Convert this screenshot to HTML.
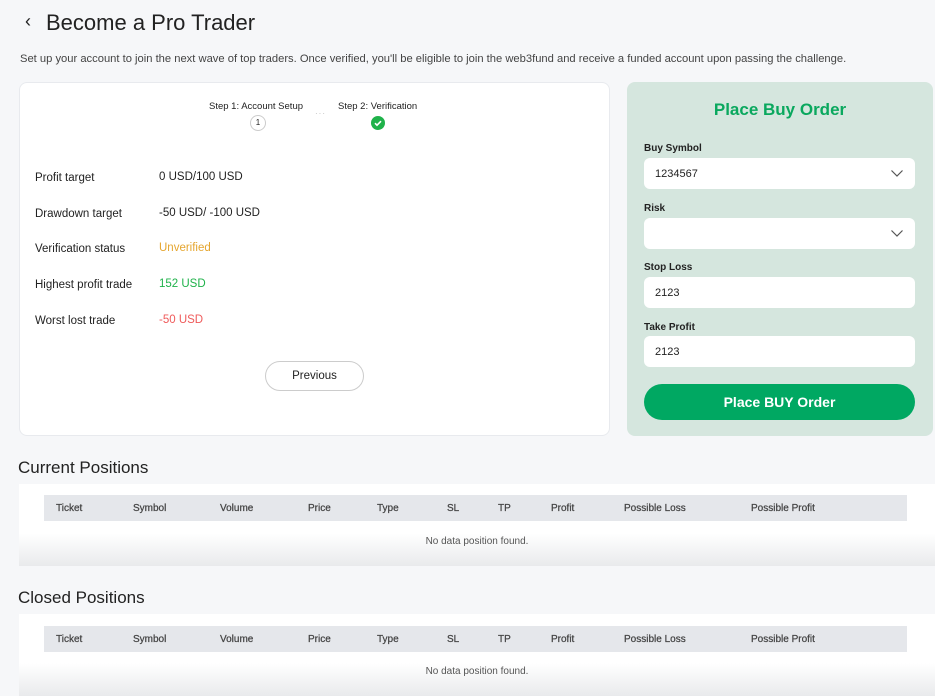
<!DOCTYPE html>
<html><head><meta charset="utf-8"><style>
*{margin:0;padding:0;box-sizing:border-box}
body{width:935px;height:693px;overflow:hidden;background:#f6f7f9;font-family:"Liberation Sans",sans-serif;color:#222;position:relative}
.a{position:absolute;white-space:nowrap}
.card{position:absolute;left:19px;top:82px;width:591px;height:354px;background:#fff;border:1px solid #e8eaee;border-radius:8px}
.panel{position:absolute;left:627px;top:82px;width:306px;height:354px;background:#d5e6de;border-radius:8px}
.lbl{font-size:10px;font-weight:bold;color:#222}
.inp{position:absolute;left:644px;width:271px;height:31px;background:#fff;border-radius:6px;font-size:11px;padding:10px 11px}
.chev{position:absolute;right:12px;top:12px}
.row{font-size:11.5px}
.tbl{position:absolute;left:19px;width:916px;background:linear-gradient(#fff 60%,#e9eaec);}
.hd{position:absolute;left:25px;width:863px;height:26px;background:#e5e7eb}
.hd span{position:absolute;top:8px;font-size:10px;color:#444;-webkit-text-stroke:0.25px #444}
.nd{position:absolute;width:100%;text-align:center;font-size:10px;color:#555}
</style></head><body>
<div class="a" style="left:25px;top:11px;font-size:18px">‹</div>
<div class="a" style="left:46px;top:10px;font-size:22px;color:#222">Become a Pro Trader</div>
<div class="a" style="left:20px;top:53px;font-size:11.2px;color:#444">Set up your account to join the next wave of top traders. Once verified, you'll be eligible to join the web3fund and receive a funded account upon passing the challenge.</div>
<div class="card"></div>
<div class="a" style="left:209px;top:101px;font-size:9.5px">Step 1: Account Setup</div>
<div class="a" style="left:338px;top:101px;font-size:9.5px">Step 2: Verification</div>
<div class="a" style="left:250px;top:115px;width:16px;height:16px;border:1px solid #ccc;border-radius:50%;font-size:8px;text-align:center;line-height:14px">1</div>
<div class="a" style="left:315px;top:109px;font-size:8px;color:#bbb;letter-spacing:1px">···</div>
<div class="a" style="left:371px;top:116px;width:14px;height:14px;background:#1fb24a;border-radius:50%"><svg width="14" height="14"><path d="M4 7.2l2 2 4-4" stroke="#fff" stroke-width="1.6" fill="none"/></svg></div>
<div class="a row" style="left:35px;top:172px">Profit target</div><div class="a row" style="left:159px;top:171px">0 USD/100 USD</div>
<div class="a row" style="left:35px;top:208px">Drawdown target</div><div class="a row" style="left:159px;top:207px">-50 USD/ -100 USD</div>
<div class="a row" style="left:35px;top:243px">Verification status</div><div class="a row" style="left:159px;top:242px;color:#e5a630">Unverified</div>
<div class="a row" style="left:35px;top:279px">Highest profit trade</div><div class="a row" style="left:159px;top:278px;color:#1fb24a">152 USD</div>
<div class="a row" style="left:35px;top:315px">Worst lost trade</div><div class="a row" style="left:159px;top:314px;color:#ef5a5a">-50 USD</div>
<div class="a" style="left:265px;top:361px;width:99px;height:30px;border:1px solid #ccc;border-radius:15px;font-size:11.5px;text-align:center;line-height:29px;background:#fff">Previous</div>
<div class="panel"></div>
<div class="a" style="left:627px;top:100px;width:306px;text-align:center;font-size:17px;font-weight:bold;color:#0aa85e">Place Buy Order</div>
<div class="a lbl" style="left:644px;top:143px">Buy Symbol</div>
<div class="inp" style="top:158px">1234567<svg class="chev" width="12" height="7"><path d="M0.5 0.5l5.5 5.5 5.5-5.5" stroke="#555" stroke-width="1.2" fill="none"/></svg></div>
<div class="a lbl" style="left:644px;top:203px">Risk</div>
<div class="inp" style="top:218px"><svg class="chev" width="12" height="7"><path d="M0.5 0.5l5.5 5.5 5.5-5.5" stroke="#555" stroke-width="1.2" fill="none"/></svg></div>
<div class="a lbl" style="left:644px;top:262px">Stop Loss</div>
<div class="inp" style="top:277px">2123</div>
<div class="a lbl" style="left:644px;top:322px">Take Profit</div>
<div class="inp" style="top:336px">2123</div>
<div class="a" style="left:644px;top:384px;width:271px;height:36px;background:#00a862;border-radius:18px;color:#fff;font-size:14px;font-weight:bold;text-align:center;line-height:37px">Place BUY Order</div>

<div class="a" style="left:18px;top:458px;font-size:17px">Current Positions</div>
<div class="tbl" style="top:484px;height:82px">
<div class="hd" style="top:11px"><span style="left:12px">Ticket</span><span style="left:89px">Symbol</span><span style="left:176px">Volume</span><span style="left:264px">Price</span><span style="left:333px">Type</span><span style="left:403px">SL</span><span style="left:454px">TP</span><span style="left:507px">Profit</span><span style="left:580px">Possible Loss</span><span style="left:707px">Possible Profit</span></div>
<div class="nd" style="top:52px">No data position found.</div></div>
<div class="a" style="left:18px;top:588px;font-size:17px">Closed Positions</div>
<div class="tbl" style="top:614px;height:82px">
<div class="hd" style="top:12px"><span style="left:12px">Ticket</span><span style="left:89px">Symbol</span><span style="left:176px">Volume</span><span style="left:264px">Price</span><span style="left:333px">Type</span><span style="left:403px">SL</span><span style="left:454px">TP</span><span style="left:507px">Profit</span><span style="left:580px">Possible Loss</span><span style="left:707px">Possible Profit</span></div>
<div class="nd" style="top:52px">No data position found.</div></div>
</body></html>
